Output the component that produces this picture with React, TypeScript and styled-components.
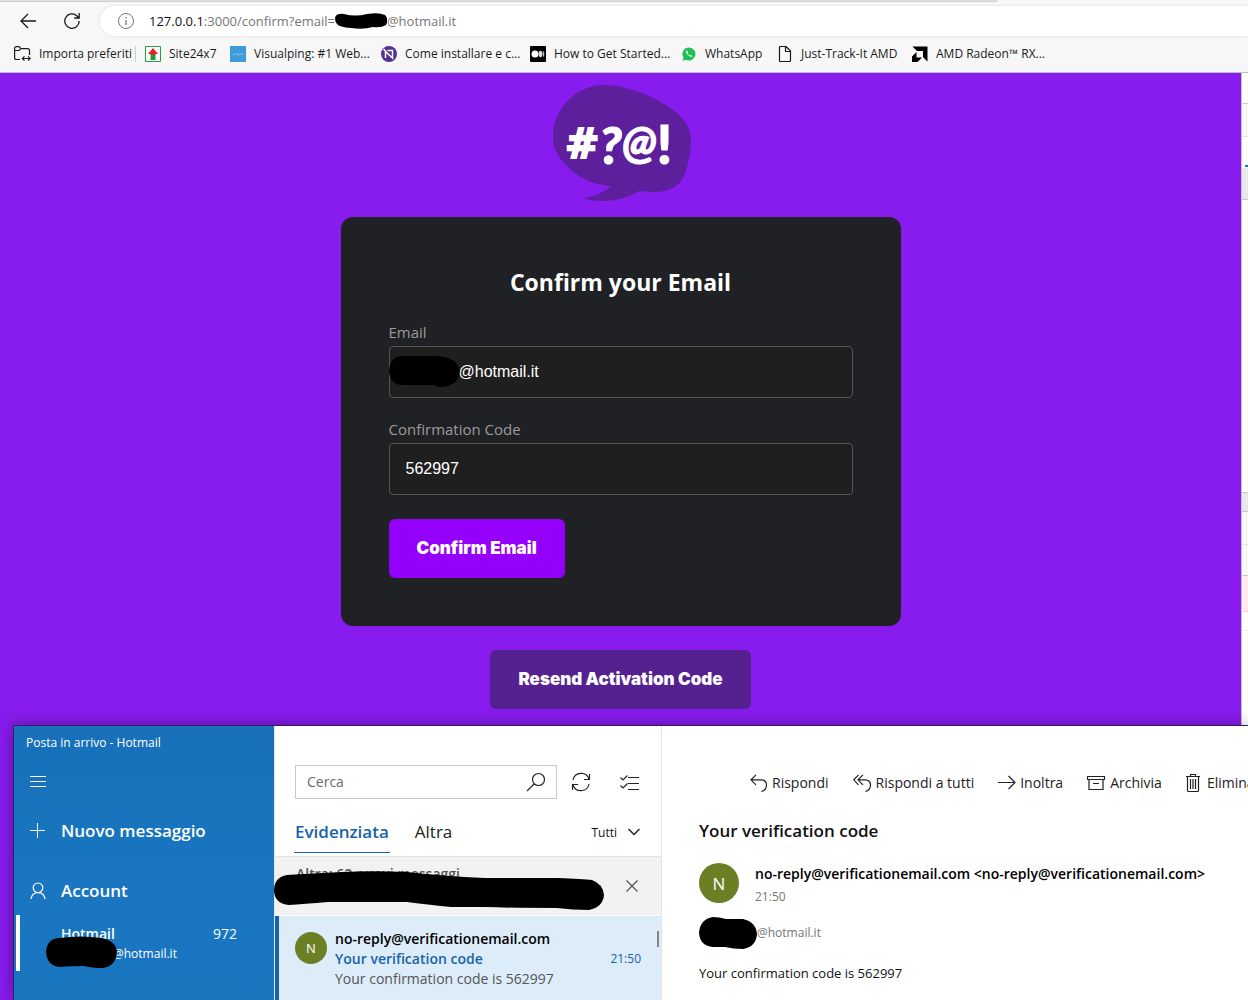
import React from "react";
import styled, { createGlobalStyle } from "styled-components";

const ui = `"Open Sans", "Noto Sans", sans-serif`;
const arial = `"Liberation Sans", Arial, sans-serif`;

const GlobalStyle = createGlobalStyle`
  *, *::before, *::after { box-sizing: border-box; }
  body { margin: 0; font-family: ${ui}; overflow: hidden; }
  button, input, select { font: inherit; color: inherit; margin: 0; }
  button { border: 0; background: none; padding: 0; cursor: pointer; text-align: left; }
  h1, h2, p { margin: 0; }
  svg { display: block; flex: none; }
`;

const Desktop = styled.div`
  position: relative;
  height: 100vh;
  overflow: hidden;
`;

/* ---------- Browser ---------- */

const Browser = styled.div`
  display: flex;
  flex-direction: column;
  height: 100%;
`;

const Chrome = styled.header`
  flex: none;
  display: flex;
  flex-direction: column;
  background: #f7f7f7;
  border-bottom: 1px solid #bdbdbd;
`;

const TabEdge = styled.div`
  width: 80%;
  height: 2px;
  background: #e0e0e0;
  border-bottom: 1px solid #cfcfcf;
  border-radius: 0 0 3px 0;
  margin-bottom: 4px;
`;

const NavRow = styled.div`
  display: flex;
  align-items: center;
  height: 30px;
  padding-left: 20px;
`;

const NavButton = styled.button`
  width: 16px;
  height: 16px;
  margin-right: 28px;
`;

const Address = styled.div`
  flex: 1;
  display: flex;
  align-items: center;
  height: 30px;
  margin-left: -8px;
  padding-left: 18px;
  background: #fff;
  border-radius: 15px 0 0 15px;
  box-shadow: 0 0 3px rgba(0, 0, 0, 0.12);
  font-size: 13px;
  line-height: 20px;
  color: #767676;
  white-space: nowrap;
`;

const AddressText = styled.span`
  margin-left: 15px;
  b { font-weight: 400; color: #111; }
`;

const Favorites = styled.nav`
  display: flex;
  align-items: center;
  gap: 16px;
  height: 36px;
  padding-left: 14px;
  font-size: 12px;
  line-height: 16px;
  color: #1b1b1b;
  white-space: nowrap;
`;

const Favorite = styled.a<{ $width: number }>`
  display: flex;
  align-items: center;
  gap: 8px;
  width: ${(p) => p.$width}px;
  color: inherit;
  text-decoration: none;
`;

const FavoriteDivider = styled.span`
  width: 1px;
  height: 16px;
  margin: 0 -7px;
  background: #cfcfcf;
`;

const Viewport = styled.div`
  flex: 1;
  display: flex;
  min-height: 0;
`;

const Page = styled.main`
  flex: 1;
  display: flex;
  flex-direction: column;
  align-items: center;
  padding-top: 12px;
  background: #881bee;
`;

const Card = styled.form`
  width: 100%;
  max-width: 560px;
  margin: 16px 0 24px;
  padding: 48px;
  background: #202124;
  border-radius: 12px;
`;

const CardTitle = styled.h1`
  margin-bottom: 22px;
  font-size: 23px;
  line-height: 34px;
  font-weight: 700;
  text-align: center;
  color: #fff;
`;

const Field = styled.div`
  position: relative;
  margin-bottom: 20px;
`;

const FieldLabel = styled.label`
  display: block;
  margin-bottom: 2px;
  font-size: 15px;
  line-height: 23px;
  color: #9b9b9b;
`;

const FieldInput = styled.input<{ $masked?: boolean }>`
  display: block;
  width: 100%;
  height: 52px;
  padding: 0 16px 0 ${(p) => (p.$masked ? 69 : 16)}px;
  background: #1f1f1f;
  border: 1px solid #555;
  border-radius: 4px;
  outline: 0;
  font: 16px/24px ${arial};
  color: #fff;
`;

const FieldMask = styled.span`
  position: absolute;
  left: 0;
  bottom: 11px;
`;

const PageButton = styled.button<{ $tone: "bright" | "muted" }>`
  padding: 18px 28px;
  background: ${(p) => (p.$tone === "bright" ? "#9500fb" : "#552191")};
  border-radius: 6px;
  font-family: Inter, ${arial};
  font-size: 17px;
  line-height: 23px;
  font-weight: 900;
  color: #fff;
`;

const CardActions = styled.div`
  display: flex;
  margin-top: 24px;
`;

/* Panel docked at the right of the page */

const DevPanel = styled.aside`
  display: flex;
  flex-direction: column;
  width: 7px;
  background: #fff;
  border-left: 1px solid #c4c4c4;
`;

const DevBand = styled.div<{ $height: number; $color: string; $line?: string }>`
  flex: none;
  height: ${(p) => p.$height}px;
  background: ${(p) => p.$color};
  border-bottom: 1px solid ${(p) => p.$line ?? "#cacaca"};
`;

const DevTab = styled.div`
  flex: none;
  height: 31px;
  padding: 28px 0 0 3px;
  background: #fcfcfc;
  &::before { content: ""; display: block; height: 2px; background: #1a73c8; }
`;

/* ---------- Mail window ---------- */

const MailWindow = styled.section`
  position: absolute;
  left: 13px;
  right: 0;
  bottom: 0;
  height: 275px;
  display: flex;
  background: #fff;
  border: solid #3a1a5e;
  border-width: 1px 0 0 1px;
  box-shadow: 0 0 16px rgba(0, 0, 0, 0.35);
  overflow: hidden;
`;

const Sidebar = styled.div`
  flex: none;
  width: 260px;
  color: #fff;
  background: linear-gradient(#1770b9, #1a76c1 60%, #1975be);
`;

const WindowTitle = styled.div`
  height: 32px;
  padding-left: 12px;
  font-size: 12px;
  line-height: 34px;
`;

const SideButton = styled.button<{ $gap?: number }>`
  display: flex;
  align-items: center;
  gap: 14px;
  width: 100%;
  height: 48px;
  margin-top: ${(p) => p.$gap ?? 0}px;
  padding-left: 15px;
  font-size: 17px;
  line-height: 24px;
  font-weight: 600;
`;

const AccountRow = styled.button`
  position: relative;
  display: grid;
  grid-template-columns: 1fr auto;
  align-content: center;
  width: calc(100% - 2px);
  height: 56px;
  margin-left: 2px;
  padding: 2px 37px 0 41px;
  border-left: 4px solid #fff;
  font-size: 14px;
  line-height: 20px;
  b { font-weight: 600; }
`;

const AccountAddress = styled.span`
  padding-left: 52px;
  font-size: 12px;
`;

const AccountMask = styled.span`
  position: absolute;
  left: 26px;
  top: 21px;
`;

const ListPane = styled.div`
  position: relative;
  flex: none;
  width: 388px;
  display: flex;
  flex-direction: column;
  border: solid #e3e3e3;
  border-width: 0 1px;
`;

const SearchRow = styled.div`
  display: flex;
  align-items: center;
  margin: 39px 22px 0 20px;
`;

const SearchBox = styled.div`
  display: flex;
  align-items: center;
  width: 262px;
  height: 34px;
  margin-right: 14px;
  padding: 0 10px 0 11px;
  border: 1px solid #c8c8c8;
`;

const SearchInput = styled.input`
  flex: 1;
  min-width: 0;
  padding: 0 0 2px;
  border: 0;
  outline: 0;
  background: none;
  font-size: 14px;
  &::placeholder { color: #6b6b6b; opacity: 1; }
`;

const IconButton = styled.button<{ $push?: boolean }>`
  margin-left: ${(p) => (p.$push ? "auto" : 0)};
`;

const Tabs = styled.div`
  display: flex;
  align-items: center;
  height: 58px;
  padding: 0 21px 0 19px;
  border-bottom: 1px solid #e3e3e3;
`;

const Tab = styled.button<{ $active?: boolean }>`
  align-self: flex-end;
  height: 43px;
  margin: 0 24px 3px 0;
  padding: 2px 1px 0;
  border-bottom: 1px solid ${(p) => (p.$active ? "#1763a8" : "transparent")};
  font-size: 17px;
  line-height: 24px;
  font-weight: ${(p) => (p.$active ? 600 : 400)};
  color: ${(p) => (p.$active ? "#1763a8" : "#222")};
`;

const Filter = styled.button`
  display: flex;
  align-items: center;
  gap: 11px;
  margin-left: auto;
  padding-top: 10px;
  font-size: 12px;
  line-height: 20px;
  color: #111;
`;

const Banner = styled.div`
  display: flex;
  justify-content: space-between;
  height: 58px;
  padding: 7px 23px 0 21px;
  background: #f2f2f2;
  font-size: 14px;
  line-height: 20px;
  font-weight: 600;
  color: #555;
`;

const BannerMask = styled.span`
  position: absolute;
  left: -2px;
  top: 145px;
`;

const BannerClose = styled.button`
  align-self: flex-start;
  margin-top: 16px;
`;

const MessageItem = styled.article`
  flex: 1;
  position: relative;
  display: flex;
  gap: 8px;
  margin-top: 1px;
  padding: 13px 20px 0 16px;
  border-left: 4px solid #1763a8;
  background: #dcecf9;
`;

const Avatar = styled.div<{ $size: number }>`
  flex: none;
  display: grid;
  place-items: center;
  width: ${(p) => p.$size}px;
  height: ${(p) => p.$size}px;
  border-radius: 50%;
  background: #6b8024;
  color: #fff;
  font-size: ${(p) => (p.$size > 32 ? 17 : 13)}px;
`;

const AvatarSlot = styled.div`
  padding-top: 3px;
`;

const MessageText = styled.div`
  flex: 1;
  font-size: 14px;
  line-height: 20px;
  color: #555;
`;

const Sender = styled.p`
  font-weight: 600;
  color: #000;
`;

const Subject = styled.p`
  display: flex;
  justify-content: space-between;
  font-weight: 600;
  color: #1763a8;
`;

const Time = styled.time`
  font-size: 12px;
  font-weight: 400;
`;

const ScrollThumb = styled.span`
  position: absolute;
  right: 2px;
  top: 15px;
  width: 2px;
  height: 16px;
  background: #7c8791;
`;

const Reader = styled.div`
  flex: 1;
  min-width: 0;
  padding: 45px 0 0 37px;
  overflow: hidden;
`;

const Toolbar = styled.div`
  display: flex;
  gap: 24px;
  padding-left: 51px;
  white-space: nowrap;
`;

const ToolButton = styled.button`
  display: flex;
  align-items: center;
  gap: 4px;
  font-size: 14px;
  line-height: 24px;
  color: #222;
`;

const ReaderTitle = styled.h2`
  margin: 24px 0 20px;
  font-size: 17px;
  line-height: 24px;
  font-weight: 600;
  color: #111;
`;

const FromRow = styled.div`
  display: flex;
  gap: 16px;
  white-space: nowrap;
`;

const FromText = styled.div`
  font-size: 14px;
  line-height: 22px;
  color: #767676;
  ${Time} { display: block; line-height: 24px; }
`;

const Recipient = styled.div`
  display: flex;
  align-items: center;
  height: 32px;
  margin: 8px 0 14px;
  font-size: 12px;
  line-height: 20px;
  color: #767676;
`;

const Body = styled.p`
  font-size: 13px;
  line-height: 20px;
  color: #111;
`;

/* ---------- Drawings ---------- */

const Line = (p: { w?: number; h?: number; d: string; stroke?: number; box?: string; color?: string }) => {
  const w = p.w ?? 16;
  const h = p.h ?? 16;
  return (
    <svg width={w} height={h} viewBox={p.box ?? `0 0 ${w} ${h}`} fill="none" stroke={p.color ?? "currentColor"} strokeWidth={p.stroke ?? 1} aria-hidden="true">
      <path d={p.d} />
    </svg>
  );
};

const Logo = () => (
  <svg width="140" height="116" viewBox="0 0 140 116" role="img" aria-label="#?@!">
    <path
      fill="#5d1f9b"
      d="M2 52C2 24 25 0 53 0C73 0 97 9 113 19C131 30 140 41 140 54C140 66 137 82 133 91C128 102 117 107 103 107C97 107 92 106 88 106C77 113 63 116 51 116C44 116 38 115 32 113C45 111 54 107 60 101C43 100 27 93 16 81C7 72 2 63 2 52Z"
    />
    <text x="14" y="73" fill="#fff" stroke="#fff" fontFamily="'DejaVu Sans', sans-serif" fontWeight="700" fontSize="41">
      <tspan strokeWidth="2">#</tspan>
      <tspan fontFamily="Lato, sans-serif" fontWeight="900" fontStyle="italic" fontSize="52" dy="6">?</tspan>
      <tspan fontFamily="Lato, sans-serif" fontWeight="900" fontStyle="italic" fontSize="45" dy="-6">@</tspan>
      <tspan fontFamily="Lato, sans-serif" fontWeight="900" fontSize="54" dy="6">!</tspan>
    </text>
  </svg>
);

const Mask = ({ w, h, d }: { w: number; h: number; d: string }) => (
  <svg width={w} height={h} viewBox={`0 0 ${w} ${h}`} aria-hidden="true">
    <path d={d} fill="#000" />
  </svg>
);

const icons = {
  importFav: (
    <svg width="17" height="16" viewBox="0 0 17 16" fill="none" stroke="#1b1b1b" strokeWidth="1.2" aria-hidden="true">
      <path d="M6 13.5H2.5Q.6 13.5 .6 11.5V2.500Q.6 .6 2.500 .6H5L7 2.600H13.500Q15.500 2.600 15.500 4.600V9M.6 4.500H5L7 2.600M8.500 12.500H16M10.500 10.300L8.300 12.500L10.500 14.700M14 10.300L16.200 12.500L14 14.700" />
    </svg>
  ),
  site: (
    <svg width="16" height="16" aria-hidden="true">
      <path d="M.5 .5H15.500V15.500H.5Z" fill="#fff" stroke="#23a346" />
      <path d="M8 2L13 8H10.500V9H5.500V8H3Z" fill="#f01d1d" />
      <path d="M5.500 8.500H10.500V14H5.500Z" fill="#1c9a33" />
    </svg>
  ),
  ping: (
    <svg width="16" height="16" aria-hidden="true">
      <path d="M0 0H16V16H0Z" fill="#3e9bdc" />
      <path d="M3 8.500H5.500L7 7L8.500 9.500L10 7.500L11 8.500H13" fill="none" stroke="#8cc6ee" />
    </svg>
  ),
  install: (
    <svg width="16" height="16" aria-hidden="true">
      <circle cx="8" cy="8" r="8" fill="#54308f" />
      <path d="M4.500 12V5.500L11.500 12V4.500H6.500" fill="none" stroke="#fff" strokeWidth="1.500" />
      <path d="M2.500 3L5 5.500" stroke="#fff" strokeWidth="1.500" />
    </svg>
  ),
  medium: (
    <svg width="16" height="16" aria-hidden="true">
      <rect width="16" height="16" rx="1" fill="#000" />
      <circle cx="5" cy="8" r="3.500" fill="#fff" />
      <ellipse cx="10.500" cy="8" rx="1.800" ry="3.300" fill="#ddd" />
      <ellipse cx="13.500" cy="8" rx=".8" ry="3" fill="#bbb" />
    </svg>
  ),
  whatsapp: (
    <svg width="16" height="16" aria-hidden="true">
      <path d="M8 1.500A6.500 6.500 0 1 1 5 13.800L1.500 14.800L2.500 11.500A6.500 6.500 0 0 1 8 1.500Z" fill="#1fbf55" />
      <path d="M5.500 4.800Q4.800 5.500 5.200 6.700Q6.500 9.700 9.500 10.800Q10.800 11 11.500 10.200L9.900 8.900L8.900 9.600Q7.300 8.800 6.500 7.200L7 6.300L6.300 4.700Z" fill="#fff" />
    </svg>
  ),
  file: <Line d="M2.500 1.500Q2.500 .5 3.500 .5H9L13.500 5V14.500Q13.500 15.500 12.500 15.500H3.500Q2.500 15.500 2.500 14.500ZM8.500 .5V5.500H13.500" stroke={1.2} color="#1b1b1b" />,
  amd: (
    <svg width="16" height="16" aria-hidden="true">
      <path d="M.5 .5H15.500V15.500L11 11V5H5ZM4.500 6V11.500H10L5.500 16H0V10.500Z" fill="#000" />
    </svg>
  ),
};

const favorites = [
  { label: "Site24x7", icon: icons.site, width: 69 },
  { label: "Visualping: #1 Web...", icon: icons.ping, width: 135 },
  { label: "Come installare e c...", icon: icons.install, width: 133 },
  { label: "How to Get Started...", icon: icons.medium, width: 135 },
  { label: "WhatsApp", icon: icons.whatsapp, width: 80 },
  { label: "Just-Track-It AMD", icon: icons.file, width: 119 },
  { label: "AMD Radeon™ RX...", icon: icons.amd, width: 131 },
];

const replyPath = "M6 .8L1 5.800L6 10.800M1 5.800H11Q16.500 6 16.500 11Q16.500 16 11.500 17.500";

const tools = [
  { label: "Rispondi", icon: <Line w={18} h={18} d={replyPath} stroke={1.2} /> },
  { label: "Rispondi a tutti", icon: <Line w={19} h={18} d="M5.500 .8L.8 5.800L5.500 10.800M10 .8L5 5.800L10 10.800M5 5.800H12Q17.500 6 17.500 11Q17.500 16 12.500 17.500" stroke={1.2} /> },
  { label: "Inoltra", icon: <Line w={18} h={18} d="M0 8.500H17M10.500 2L17 8.500L10.500 15" stroke={1.2} /> },
  { label: "Archivia", icon: <Line w={19} h={18} d="M.5 2.500H17.500V5.500H.5ZM2 5.500V15.500H16V5.500M6 9.500H12" stroke={1.2} /> },
  { label: "Elimina", icon: <Line w={17} h={20} d="M0 3.500H14M1.500 3.500V17.500Q1.500 18.500 2.500 18.500H11.500Q12.500 18.500 12.500 17.500V3.500M4.500 3.500V1.500H9.500V3.500M4.500 6V16M7 6V16M9.500 6V16" stroke={1.2} /> },
];

export default function App() {
  return (
    <Desktop>
      <GlobalStyle />
      <Browser>
        <Chrome>
          <TabEdge />
          <NavRow>
            <NavButton aria-label="Indietro">
              <Line d="M16 8H1M8 1L1 8L8 15" stroke={1.3} color="#1b1b1b" />
            </NavButton>
            <NavButton aria-label="Aggiorna">
              <Line d="M15.200 8A7.200 7.200 0 1 1 12.800 2.700L15 5M15.200 0V5H10.200" stroke={1.3} color="#1b1b1b" />
            </NavButton>
            <Address>
              <svg width="16" height="16" fill="none" stroke="#767676" aria-hidden="true">
                <circle cx="8" cy="8" r="7.500" />
                <path d="M8 7V12M8 4V5.500" strokeWidth="1.300" />
              </svg>
              <AddressText>
                <b>127.0.0.1</b>:3000/confirm?email=
              </AddressText>
              <Mask w={52} h={16} d="M0 5Q1 0 9 1Q20 4 32 1Q44 -1 50 2Q54 6 51 12Q46 15 38 14Q28 17 16 15Q4 14 2 11Q0 9 0 5Z" />
              <span>@hotmail.it</span>
            </Address>
          </NavRow>
          <Favorites>
            <Favorite href="#" $width={112}>
              {icons.importFav}
              Importa preferiti
            </Favorite>
            <FavoriteDivider />
            {favorites.map((f) => (
              <Favorite key={f.label} href="#" $width={f.width}>
                {f.icon}
                {f.label}
              </Favorite>
            ))}
          </Favorites>
        </Chrome>
        <Viewport>
          <Page>
            <Logo />
            <Card onSubmit={(e) => e.preventDefault()}>
              <CardTitle>Confirm your Email</CardTitle>
              <Field>
                <FieldLabel htmlFor="email">Email</FieldLabel>
                <FieldInput id="email" $masked defaultValue="@hotmail.it" />
                <FieldMask>
                  <Mask w={72} h={32} d="M0 16Q1 1 14 1H44Q62 1 68 9Q73 15 69 23Q65 31 54 32Q48 32 44 30H14Q1 30 0 16Z" />
                </FieldMask>
              </Field>
              <Field>
                <FieldLabel htmlFor="code">Confirmation Code</FieldLabel>
                <FieldInput id="code" defaultValue="562997" />
              </Field>
              <CardActions>
                <PageButton $tone="bright" type="submit">Confirm Email</PageButton>
              </CardActions>
            </Card>
            <PageButton $tone="muted" type="button">Resend Activation Code</PageButton>
          </Page>
          <DevPanel>
            <DevBand $height={31} $color="#fff" />
            <DevBand $height={33} $color="#f7f7f7" $line="#e4e4e4" />
            <DevTab />
            <DevBand $height={32} $color="#e8e8e8" />
            <DevBand $height={293} $color="#fff" />
            <DevBand $height={19} $color="#e8e8e8" />
            <DevBand $height={33} $color="#f7f7f7" $line="#e4e4e4" />
            <DevBand $height={31} $color="#f7f7f7" />
            <DevBand $height={36} $color="#ffebeb" $line="#ffd0d0" />
            <DevBand $height={19} $color="#fff" $line="#ececec" />
          </DevPanel>
        </Viewport>
      </Browser>

      <MailWindow>
        <Sidebar>
          <WindowTitle>Posta in arrivo - Hotmail</WindowTitle>
          <SideButton aria-label="Menu">
            <Line w={18} h={12} d="M1 .5H17M1 5.500H17M1 10.500H17" />
          </SideButton>
          <SideButton $gap={1}>
            <Line w={18} d="M1 7.500H16M8.500 0V15" stroke={1} />
            Nuovo messaggio
          </SideButton>
          <SideButton $gap={12}>
            <Line w={18} h={18} d="M9 1A4.800 4.800 0 1 1 9 10.600A4.800 4.800 0 1 1 9 1M2 17Q3 10.600 9 10.600Q15 10.600 16 17" stroke={1.2} />
            Account
          </SideButton>
          <AccountRow>
            <b>Hotmail</b>
            <span>972</span>
            <AccountAddress>@hotmail.it</AccountAddress>
            <AccountMask>
              <Mask w={71} h={32} d="M0 16Q1 2 14 2Q34 -1 56 2Q70 5 71 16Q70 30 57 32Q46 32 38 30Q24 30 14 31Q1 30 0 16Z" />
            </AccountMask>
          </AccountRow>
        </Sidebar>

        <ListPane>
          <SearchRow>
            <SearchBox>
              <SearchInput aria-label="Cerca" placeholder="Cerca" />
              <Line w={20} h={20} d="M12.500 1.500A6 6 0 1 1 12.500 13.500A6 6 0 1 1 12.500 1.500M8.500 11.500L1 19" stroke={1.2} color="#222" />
            </SearchBox>
            <IconButton aria-label="Sincronizza">
              <Line w={20} h={20} d="M2 8A8.300 8.300 0 0 1 18 7M18.500 2V7.500H13M18 12A8.300 8.300 0 0 1 2 13M1.500 18V12.500H7" stroke={1.2} color="#222" />
            </IconButton>
            <IconButton $push aria-label="Seleziona">
              <Line w={19} h={16} d="M8 3.500H19M8 9.500H19M8 15.500H19M.5 3.500L3 6L7.500 1.500M.5 11.500L3 14L7.500 9.500" stroke={1.2} color="#222" />
            </IconButton>
          </SearchRow>
          <Tabs>
            <Tab $active>Evidenziata</Tab>
            <Tab>Altra</Tab>
            <Filter>
              Tutti
              <Line w={12} h={10} d="M.5 1L6 6.500L11.500 1" stroke={1.5} color="#222" />
            </Filter>
          </Tabs>
          <Banner>
            Altra: 62 nuovi messaggi
            <BannerClose aria-label="Chiudi">
              <Line w={12} h={12} d="M.5 .5L11.500 11.500M11.500 .5L.5 11.500" stroke={1.2} color="#555" />
            </BannerClose>
          </Banner>
          <BannerMask>
            <Mask w={332} h={40} d="M1 20Q1 6 14 4Q30 3 50 2Q90 -1 134 1Q170 5 212 7H285Q310 8 319 9Q330 13 331 24Q330 36 316 39Q300 39 284 37Q240 37 212 36H178Q158 34 134 31H55Q30 33 16 34Q2 33 1 20Z" />
          </BannerMask>
          <MessageItem>
            <AvatarSlot>
              <Avatar $size={32}>N</Avatar>
            </AvatarSlot>
            <MessageText>
              <Sender>no-reply@verificationemail.com</Sender>
              <Subject>
                Your verification code
                <Time>21:50</Time>
              </Subject>
              <p>Your confirmation code is 562997</p>
            </MessageText>
            <ScrollThumb />
          </MessageItem>
        </ListPane>

        <Reader>
          <Toolbar>
            {tools.map((t) => (
              <ToolButton key={t.label}>
                {t.icon}
                {t.label}
              </ToolButton>
            ))}
          </Toolbar>
          <ReaderTitle>Your verification code</ReaderTitle>
          <FromRow>
            <Avatar $size={40}>N</Avatar>
            <FromText>
              <Sender>no-reply@verificationemail.com &lt;no-reply@verificationemail.com&gt;</Sender>
              <Time>21:50</Time>
            </FromText>
          </FromRow>
          <Recipient>
            <Mask w={58} h={32} d="M0 16Q1 2 14 0Q20 0 27 2Q34 2 44 2Q57 5 58 17Q57 30 44 32Q34 32 26 30H14Q1 29 0 16Z" />
            @hotmail.it
          </Recipient>
          <Body>Your confirmation code is 562997</Body>
        </Reader>
      </MailWindow>
    </Desktop>
  );
}
